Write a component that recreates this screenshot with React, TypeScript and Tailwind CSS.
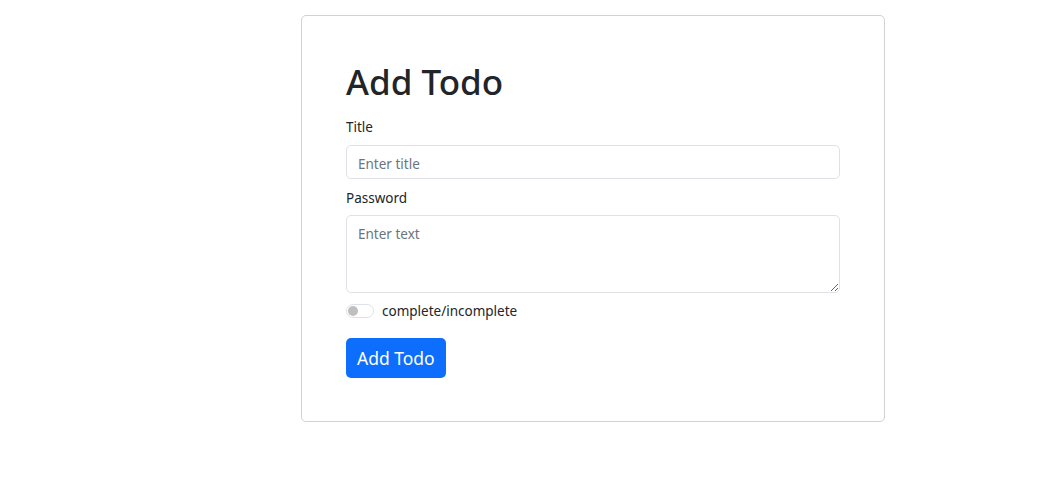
import { useState } from "react"

function Card({ children }: { children: React.ReactNode }) {
    return (
        <div className="ml-[301px] mt-[15px] w-[584px] rounded-[5px] border border-[#d2d2d2] bg-white px-[44px] pt-[44px] pb-[43px]">
            {children}
        </div>
    );
}

export default function App() {
    const [done, setDone] = useState(false);

    return (
        <div className="min-h-[489px] bg-white font-['Noto_Sans',sans-serif] text-[#212529]">
            <Card>
                <h1 className="text-[35px] font-medium leading-[43px]">Add Todo</h1>

                <div className="mt-[14px] text-[13.5px] leading-[21px]">Title</div>
                <input
                    className="mt-[7px] block h-[34px] w-full rounded-[5px] border border-[#dee2e6] px-[11px] pt-[4px] text-[13.5px] outline-none placeholder:text-[#6c757d]"
                    placeholder="Enter title"
                />

                <div className="mt-[9px] text-[13.5px] leading-[21px]">Password</div>
                <textarea
                    className="mt-[6px] block h-[78px] w-full rounded-[5px] border border-[#dee2e6] px-[11px] pt-[8px] pb-[6px] text-[13.5px] outline-none placeholder:text-[#6c757d]"
                    placeholder="Enter text"
                />

                <label className="mt-[10px] flex h-[16px] items-center gap-[8px] text-[13.5px]">
                    <button
                        onClick={() => setDone(!done)}
                        className="flex h-[14px] w-[28px] items-center rounded-full border border-[#dee2e6] px-[1px]"
                    >
                        <span className="h-[10px] w-[10px] rounded-full bg-[#bfbfbf]" />
                    </button>
                    complete/incomplete
                </label>

                <button className="mt-[19px] h-[40px] rounded-[5px] bg-[#0d6efd] px-[11px] text-[17.5px] text-white">
                    Add Todo
                </button>
            </Card>
        </div>
    );
}
